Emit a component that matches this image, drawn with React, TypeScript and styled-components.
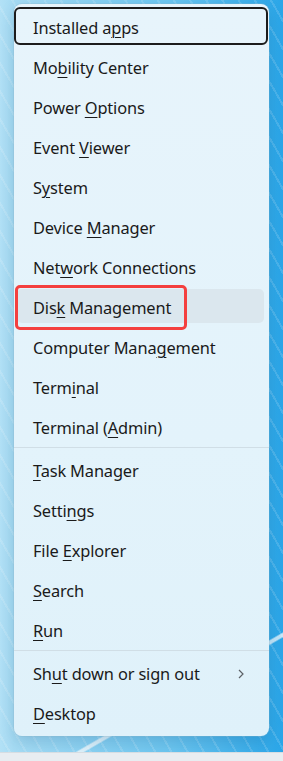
import styled, { createGlobalStyle } from 'styled-components';

const GlobalStyle = createGlobalStyle`
  html, body {
    margin: 0;
    padding: 0;
  }
  body {
    width: 283px;
    height: 761px;
    overflow: hidden;
    font-family: 'Noto Sans', 'Open Sans', sans-serif;
  }
`;

type Item = { label: string; key: number; active?: boolean; marked?: boolean; submenu?: boolean; focused?: boolean };

const groups: Item[][] = [
  [
    { label: 'Installed apps', key: 11, focused: true },
    { label: 'Mobility Center', key: 2 },
    { label: 'Power Options', key: 6 },
    { label: 'Event Viewer', key: 6 },
    { label: 'System', key: 1 },
    { label: 'Device Manager', key: 7 },
    { label: 'Network Connections', key: 3 },
    { label: 'Disk Management', key: 3, active: true, marked: true },
    { label: 'Computer Management', key: 13 },
    { label: 'Terminal', key: 4 },
    { label: 'Terminal (Admin)', key: 10 },
  ],
  [
    { label: 'Task Manager', key: 0 },
    { label: 'Settings', key: 5 },
    { label: 'File Explorer', key: 5 },
    { label: 'Search', key: 0 },
    { label: 'Run', key: 0 },
  ],
  [
    { label: 'Shut down or sign out', key: 2, submenu: true },
    { label: 'Desktop', key: 0 },
  ],
];

function Label({ text, at }: { text: string; at: number }) {
  return (
    <span>
      {text.slice(0, at)}
      <Key>{text[at]}</Key>
      {text.slice(at + 1)}
    </span>
  );
}

export default function App() {
  return (
    <>
      <GlobalStyle />
      <Desk>
        <Menu>
          {groups.map((group, gi) => (
            <Group key={gi}>
              {gi > 0 && <Separator />}
              {group.map((item) => (
                <Row key={item.label} $focused={item.focused}>
                  <Hover $active={item.active}>
                    <Label text={item.label} at={item.key} />
                    {item.submenu && (
                      <Chevron width="6" height="10" viewBox="0 0 6 10">
                        <path d="M1 1l4 4-4 4" fill="none" stroke="#5c6166" strokeWidth="1.2" />
                      </Chevron>
                    )}
                  </Hover>
                  {item.marked && <Marker />}
                </Row>
              ))}
            </Group>
          ))}
        </Menu>
        <Taskbar />
      </Desk>
    </>
  );
}

const Desk = styled.div`
  position: relative;
  width: 283px;
  height: 761px;
  display: flex;
  flex-direction: column;
  background:
    linear-gradient(150deg, transparent 0 86%, rgba(255, 255, 255, 0.7) 86.2% 86.5%, transparent 86.7%),
    repeating-linear-gradient(60deg, transparent 0 12px, rgba(255, 255, 255, 0.14) 12px 14px),
    linear-gradient(90deg, #b2e1f6 0, #a6dcf4 14px, #6cc6f0 60%, #2aa6e8 100%);
`;

const Menu = styled.div`
  margin: 4px 0 0 14px;
  width: 255px;
  height: 732px;
  box-sizing: border-box;
  padding: 2px 0;
  border-radius: 8px;
  background: linear-gradient(180deg, #e7f4fb 0%, #e3f3fb 60%, #dff1fa 100%);
  box-shadow: 0 0 0 1px rgba(140, 180, 200, 0.25), 0 6px 16px rgba(0, 60, 110, 0.18);
  display: flex;
  flex-direction: column;
`;

const Group = styled.div`
  display: flex;
  flex-direction: column;
`;

const Separator = styled.div`
  height: 1px;
  margin: 1px 0 1px;
  background: #d0dee6;
`;

const Row = styled.div<{ $focused?: boolean }>`
  position: relative;
  height: 40px;
  box-sizing: border-box;
  padding: ${(p) => (p.$focused ? '1px 1px 1px 0' : '3px 5px 3px 3px')};

  ${(p) =>
    p.$focused &&
    `
    & > div {
      border: 2px solid #1c1c1c;
      border-radius: 6px;
      padding-left: 17px;
    }
  `}
`;

const Hover = styled.div<{ $active?: boolean }>`
  height: 100%;
  box-sizing: border-box;
  display: flex;
  align-items: center;
  padding: 4px 12px 0 16px;
  border-radius: 5px;
  background: ${(p) => (p.$active ? '#dbe7ee' : 'transparent')};
  color: #1a1a1a;
  font-size: 16.4px;
  letter-spacing: -0.15px;
  line-height: 20px;

  & > span {
    flex: 1;
    white-space: nowrap;
  }
`;

const Key = styled.span`
  text-decoration: underline;
  text-decoration-thickness: 1px;
  text-underline-offset: 3px;
`;

const Chevron = styled.svg`
  flex: none;
  margin-right: 8px;
`;

const Marker = styled.div`
  position: absolute;
  left: 1px;
  top: -1px;
  width: 172px;
  height: 45px;
  box-sizing: border-box;
  border: 3px solid #f4403f;
  border-radius: 5px;
  pointer-events: none;
`;

const Taskbar = styled.div`
  margin-top: auto;
  height: 8px;
  background: #e8edf1;
  border-top: 1px solid #d7dde2;
`;
